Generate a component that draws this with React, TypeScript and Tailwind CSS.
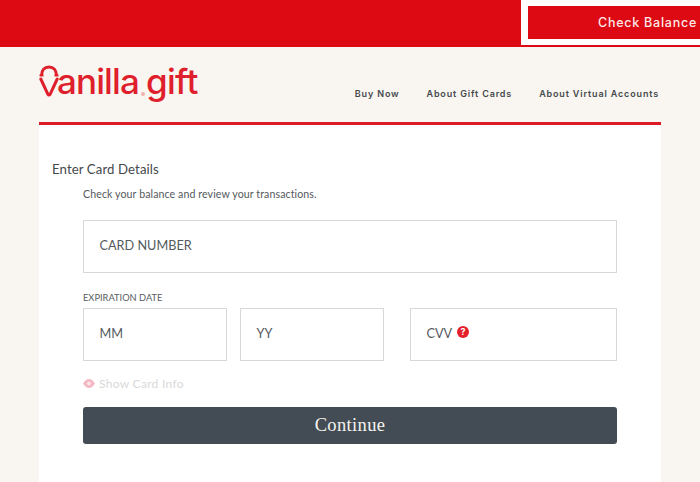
import React from 'react';

function Logo() {
  return (
    <div className="relative h-[46px] w-[165px] shrink-0 text-[#e01f2d]">
      {/* V mark with the balloon top */}
      <svg className="absolute left-0 top-[10px]" width="22" height="34" viewBox="0 0 22 34" fill="none" stroke="#e01f2d" strokeWidth="3">
        <path d="M2.5 10.5 C2.5 5 5.5 2 10 2 C14.5 2 17.5 5 17.5 10.5" />
        <path d="M0.5 10.5 H4.5 M15.5 10.5 H19.5" strokeWidth="1.8" />
        <path d="M1.8 14 L8.8 29.2 Q10 31 11.2 29.2 L18.2 14" strokeLinecap="round" strokeLinejoin="round" />
      </svg>
      <span className="absolute left-[18px] top-[3px] font-['Inter',sans-serif] text-[35px] font-medium leading-[46px] tracking-[-0.9px] whitespace-nowrap">
        anilla
      </span>
      <span className="absolute left-[102px] top-[37px] size-[4px] rounded-full bg-[#eeb3ac]" />
      <span className="absolute left-[107px] top-[3px] font-['Inter',sans-serif] text-[35px] font-medium leading-[46px] tracking-[-0.7px] whitespace-nowrap">
        gift
      </span>
    </div>
  );
}

function Field({ label, className, children }: { label: string; className?: string; children?: React.ReactNode }) {
  return (
    <div className={`flex h-[53px] items-center border border-[#d8d8d8] bg-white pb-[1px] pl-[15.5px] font-['Lato',sans-serif] text-[12.7px] text-[#555a5e] ${className ?? ''}`}>
      {label}
      {children}
    </div>
  );
}

export default function App() {
  return (
    <div className="h-[482px] w-[700px] overflow-hidden bg-[#f9f6f1] font-['Inter',sans-serif]">
      <header className="flex h-[47px] justify-end bg-[#dd0a14]">
        <div className="h-[45px] w-[179px] bg-white pl-[7px] pt-[6px]">
          <div className="flex h-[33px] items-center justify-end bg-[#dd0a14] pr-[3px] pt-[1px] text-[12.5px] font-medium tracking-[0.75px] text-[#fbe9e6]">
            Check Balance
          </div>
        </div>
      </header>

      <div className="mx-[39px] flex h-[75px] items-start justify-between">
        <div className="pt-[8px]"><Logo /></div>
        <nav className="mr-[2px] flex gap-[27px] pt-[40px] text-[9px] font-semibold leading-[13px] tracking-[0.85px] text-[#45494c]">
          <span>Buy Now</span>
          <span>About Gift Cards</span>
          <span>About Virtual Accounts</span>
        </nav>
      </div>

      <main className="mx-[39px] h-[360px] border-t-[3px] border-[#dd1a26] bg-white pl-[13px] pr-[44px] pt-[36px]">
        <h1 className="font-['Lato',sans-serif] text-[13.2px] leading-[17px] tracking-[0.1px] text-[#45494c]">Enter Card Details</h1>
        <div className="pl-[31px]">
          <p className="mt-[9px] font-['Lato',sans-serif] text-[10.6px] leading-[15px] tracking-[0.1px] text-[#55595c]">Check your balance and review your transactions.</p>
          <Field label="CARD NUMBER" className="mt-[18px]" />
          <p className="mt-[19px] font-['Lato',sans-serif] text-[9.3px] leading-[12px] text-[#5a5e61]">EXPIRATION DATE</p>
          <div className="mt-[4px] flex">
            <Field label="MM" className="w-[144px]" />
            <Field label="YY" className="ml-[13px] w-[144px]" />
            <Field label="CVV" className="ml-[26px] w-[207px]">
              <svg className="mb-[5px] ml-[5px]" width="12" height="12" viewBox="0 0 12 12">
                <circle cx="6" cy="6" r="6" fill="#e3202c" />
                <text x="6" y="9.2" textAnchor="middle" fontSize="9" fontWeight="700" fontFamily="Inter, sans-serif" fill="#fff">?</text>
              </svg>
            </Field>
          </div>
          <div className="mt-[15px] flex items-center gap-[4px] font-['Lato',sans-serif] text-[12px] leading-[15px] tracking-[0.3px] text-[#d9d9d9]">
            <svg width="12" height="9" viewBox="0 0 12 9">
              <path d="M0 4.5 C2 1.2 4 0 6 0 C8 0 10 1.2 12 4.5 C10 7.8 8 9 6 9 C4 9 2 7.8 0 4.5 Z" fill="#f4b8c4" />
              <circle cx="6" cy="4.5" r="2" fill="#fbe3e8" />
            </svg>
            Show Card Info
          </div>
          <button className="mt-[16px] flex h-[37px] w-[534px] items-center justify-center rounded-[3px] bg-[#434c54] font-['Liberation_Serif',serif] text-[18.5px] tracking-[0.35px] text-[#f6f4ef]">
            Continue
          </button>
        </div>
      </main>
    </div>
  );
}
